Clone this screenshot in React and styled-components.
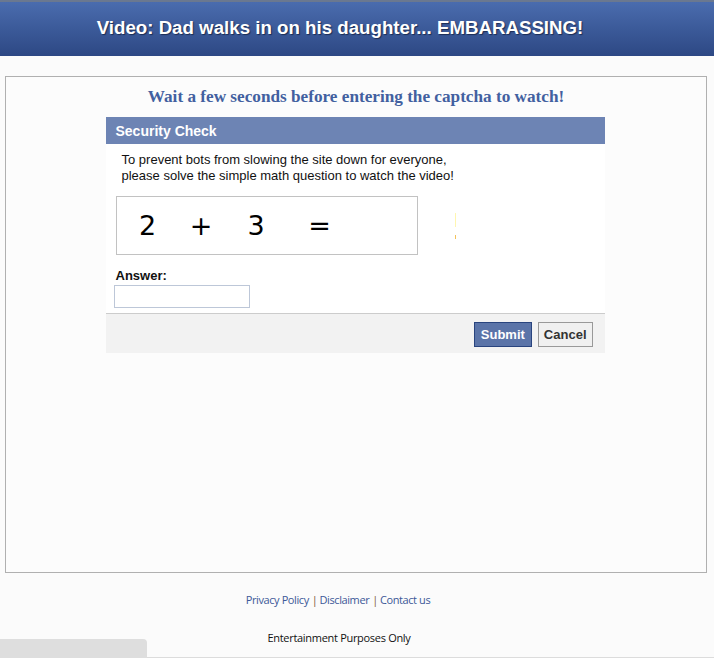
import styled, { createGlobalStyle } from 'styled-components';

const GlobalStyle = createGlobalStyle`
  html, body {
    margin: 0;
    padding: 0;
    background: #fbfbfb;
    font-family: "Liberation Sans", Arial, sans-serif;
  }
`;

const Page = styled.div`
  min-height: 658px;
  display: flex;
  flex-direction: column;
  position: relative;
`;

const Header = styled.div`
  height: 54px;
  border-top: 2px solid #6a7890;
  background: linear-gradient(#4a6cae, #2d4884);
  display: flex;
  align-items: center;
  justify-content: center;
`;

const Title = styled.h1`
  margin: 0 34px 2px 0;
  color: #fff;
  font-size: 18.7px;
  font-weight: bold;
  text-shadow: 1px 1px 1px #1c2d55;
`;

const Main = styled.div`
  margin: 20px 7px 0 5px;
  height: 495px;
  border: 1px solid #b0b0b0;
  background: #fcfcfc;
  display: flex;
  flex-direction: column;
  align-items: center;
`;

const Notice = styled.h2`
  margin: 10px 0 0;
  font-family: "Liberation Serif", "Times New Roman", serif;
  font-size: 17.2px;
  font-weight: bold;
  color: #4260a0;
  height: 30px;
`;

const Panel = styled.div`
  width: 499px;
  margin-right: 2px;
  background: #fff;
`;

const PanelHead = styled.div`
  height: 27px;
  background: #6d84b4;
  color: #fff;
  font-size: 14px;
  font-weight: bold;
  display: flex;
  align-items: center;
  padding-left: 10px;
`;

const PanelBody = styled.div`
  padding: 8px 8px 5px 8px;
`;

const Intro = styled.p`
  margin: 0 0 0 8px;
  font-size: 13px;
  line-height: 16px;
  color: #111;
`;

const CaptchaRow = styled.div`
  display: flex;
  align-items: center;
  margin: 12px 0 0 2px;
`;

const Captcha = styled.div`
  width: 300px;
  height: 57px;
  border: 1px solid #c2c2c2;
  display: flex;
  align-items: center;
  font-family: "DejaVu Sans", Verdana, sans-serif;
  font-size: 27px;
  color: #000;
`;

const Glyph = styled.span`
  width: ${p => p.$w}px;
  text-align: center;
  flex: none;
`;

const Speck = styled.div`
  width: 1px;
  height: 26px;
  margin-left: 37px;
  background: linear-gradient(#fff6b0 0 55%, #ffffff 55% 85%, #f3c25a 85%);
`;

const Label = styled.div`
  margin: 13px 0 0 2px;
  font-size: 13px;
  font-weight: bold;
  color: #111;
`;

const AnswerInput = styled.input`
  display: block;
  margin-top: 2px;
  width: 134px;
  height: 21px;
  padding: 0;
  border: 1px solid #bdc7d8;
  box-sizing: content-box;
  outline: none;
`;

const Actions = styled.div`
  height: 39px;
  border-top: 1px solid #cccccc;
  background: #f2f2f2;
  display: flex;
  align-items: center;
  justify-content: flex-end;
  gap: 6px;
  padding-right: 12px;
`;

const Btn = styled.button`
  height: 25px;
  padding: 0 ${p => (p.$primary ? 6 : 5)}px;
  font-family: "Liberation Sans", Arial, sans-serif;
  font-size: 13px;
  font-weight: bold;
  border: 1px solid ${p => (p.$primary ? '#29447e' : '#999')};
  background: ${p => (p.$primary ? '#5b74a8' : '#f0f0f0')};
  color: ${p => (p.$primary ? '#fff' : '#333')};
  margin-top: 2px;
`;

const Links = styled.div`
  margin: 19px 38px 0 0;
  text-align: center;
  font-family: "Open Sans", sans-serif;
  font-size: 11px;
  color: #3b5998;
  letter-spacing: -0.4px;
`;

const Link = styled.a`
  color: #3b5998;
  text-decoration: none;
`;

const Sep = styled.span`
  color: #7a5a35;
  margin: 0 2px 0 3px;
`;

const Fine = styled.div`
  margin: 23px 36px 0 0;
  text-align: center;
  font-family: "Open Sans", sans-serif;
  font-size: 11px;
  letter-spacing: -0.3px;
  color: #111;
`;

const Tab = styled.div`
  position: absolute;
  left: 0;
  bottom: 0;
  width: 147px;
  height: 19px;
  background: #dedede;
  border-top-right-radius: 4px;
`;

const BottomLine = styled.div`
  position: absolute;
  left: 0;
  right: 0;
  bottom: 0;
  height: 1px;
  background: #dcdcdc;
`;

export default function App() {
  return (
    <Page>
      <GlobalStyle />
      <Header>
        <Title>Video: Dad walks in on his daughter... EMBARASSING!</Title>
      </Header>
      <Main>
        <Notice>Wait a few seconds before entering the captcha to watch!</Notice>
        <Panel>
          <PanelHead>Security Check</PanelHead>
          <PanelBody>
            <Intro>
              To prevent bots from slowing the site down for everyone,
              <br />
              please solve the simple math question to watch the video!
            </Intro>
            <CaptchaRow>
              <Captcha>
                <Glyph $w={62}>2</Glyph>
                <Glyph $w={45}>+</Glyph>
                <Glyph $w={65}>3</Glyph>
                <Glyph $w={62}>=</Glyph>
              </Captcha>
              <Speck />
            </CaptchaRow>
            <Label>Answer:</Label>
            <AnswerInput type="text" />
          </PanelBody>
          <Actions>
            <Btn $primary>Submit</Btn>
            <Btn>Cancel</Btn>
          </Actions>
        </Panel>
      </Main>
      <Links>
        <Link href="#">Privacy Policy</Link>
        <Sep>|</Sep>
        <Link href="#">Disclaimer</Link>
        <Sep>|</Sep>
        <Link href="#">Contact us</Link>
      </Links>
      <Fine>Entertainment Purposes Only</Fine>
      <BottomLine />
      <Tab />
    </Page>
  );
}
